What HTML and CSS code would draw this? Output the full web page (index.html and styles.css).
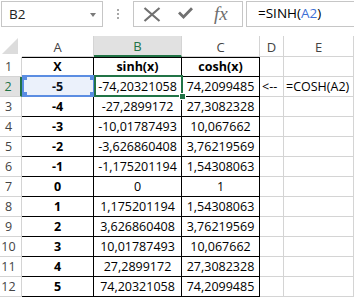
FILE: index.html
```html
<!DOCTYPE html>
<html lang="en">
  <head>
    <meta charset="UTF-8" />
    <title>sinh / cosh</title>
    <link rel="stylesheet" href="styles.css">
  </head>
  <body>
    <div class="formula-bar">
      <div class="name-box">
        <span>B2</span>
        <span class="caret"></span>
      </div>
      <div class="grip">
        <span></span><span></span><span></span>
      </div>
      <div class="buttons">
        <svg class="icon-cancel" viewBox="0 0 18 15">
          <path d="M1.5 1 L16.5 14 M16.5 1 L1.5 14" />
        </svg>
        <svg class="icon-enter" viewBox="0 0 15 12">
          <path d="M1 5.5 L5.5 10 L14 1.2" />
        </svg>
        <span class="fx">fx</span>
      </div>
      <div class="formula">=SINH(<span class="ref">A2</span>)</div>
    </div>

    <div class="sheet">
      <table>
        <colgroup>
          <col class="w-head" /><col class="w-a" /><col class="w-b" />
          <col class="w-c" /><col class="w-d" /><col class="w-e" />
        </colgroup>
        <tr>
          <th class="corner">
            <svg viewBox="0 0 22 20"><polygon points="18,2 18,18 2,18" /></svg>
          </th>
          <th class="col-head">A</th>
          <th class="col-head active">B</th>
          <th class="col-head">C</th>
          <th class="col-head">D</th>
          <th class="col-head">E</th>
        </tr>
        <tr class="first">
          <th class="row-head">1</th>
          <td class="box bold">X</td><td class="box bold">sinh(x)</td><td class="box bold">cosh(x)</td>
          <td></td><td></td>
        </tr>
        <tr>
          <th class="row-head active">2</th>
          <td class="box bold">-5</td><td class="box">-74,20321058</td><td class="box">74,2099485</td>
          <td class="text">&lt;--</td><td class="text">=COSH(A2)</td>
        </tr>
        <tr>
          <th class="row-head">3</th>
          <td class="box bold">-4</td><td class="box">-27,2899172</td><td class="box">27,3082328</td>
          <td></td><td></td>
        </tr>
        <tr>
          <th class="row-head">4</th>
          <td class="box bold">-3</td><td class="box">-10,01787493</td><td class="box">10,067662</td>
          <td></td><td></td>
        </tr>
        <tr>
          <th class="row-head">5</th>
          <td class="box bold">-2</td><td class="box">-3,626860408</td><td class="box">3,76219569</td>
          <td></td><td></td>
        </tr>
        <tr>
          <th class="row-head">6</th>
          <td class="box bold">-1</td><td class="box">-1,175201194</td><td class="box">1,54308063</td>
          <td></td><td></td>
        </tr>
        <tr>
          <th class="row-head">7</th>
          <td class="box bold">0</td><td class="box">0</td><td class="box">1</td>
          <td></td><td></td>
        </tr>
        <tr>
          <th class="row-head">8</th>
          <td class="box bold">1</td><td class="box">1,175201194</td><td class="box">1,54308063</td>
          <td></td><td></td>
        </tr>
        <tr>
          <th class="row-head">9</th>
          <td class="box bold">2</td><td class="box">3,626860408</td><td class="box">3,76219569</td>
          <td></td><td></td>
        </tr>
        <tr>
          <th class="row-head">10</th>
          <td class="box bold">3</td><td class="box">10,01787493</td><td class="box">10,067662</td>
          <td></td><td></td>
        </tr>
        <tr>
          <th class="row-head">11</th>
          <td class="box bold">4</td><td class="box">27,2899172</td><td class="box">27,3082328</td>
          <td></td><td></td>
        </tr>
        <tr>
          <th class="row-head">12</th>
          <td class="box bold">5</td><td class="box">74,20321058</td><td class="box">74,2099485</td>
          <td></td><td></td>
        </tr>
      </table>

      <!-- range referenced by the formula -->
      <div class="ref-range">
        <span class="handle tl"></span><span class="handle tr"></span>
        <span class="handle bl"></span><span class="handle br"></span>
      </div>
      <!-- active cell -->
      <div class="active-cell"><span class="fill-handle"></span></div>
    </div>
  </body>
</html>
```

FILE: styles.css
```css
:root {
  --grid: #d4d4d4;
  --frame: #c6c6c6;
  --excel-green: #217346;
  --ref-blue: #5b8de2;
  --head-text: #444444;
}

* {
  margin: 0;
  padding: 0;
  box-sizing: border-box;
}

body {
  width: 354px;
  height: 297px;
  overflow: hidden;
  background: #ffffff;
  font-family: "Open Sans", "Noto Sans", sans-serif;
  color: #000000;
}

/* formula bar */

.formula-bar {
  display: flex;
  align-items: flex-start;
  height: 36px;
  padding: 1px 0 0 1px;
}

.name-box {
  width: 102px;
  height: 26px;
  border: 1px solid var(--frame);
  display: flex;
  align-items: center;
  justify-content: space-between;
  padding: 0 6px 0 7px;
  font-size: 13.5px;
  color: #222222;
}

.caret {
  border-left: 3.5px solid transparent;
  border-right: 3.5px solid transparent;
  border-top: 4px solid #7a7a7a;
  margin-top: 1px;
}

.grip {
  width: 30px;
  height: 26px;
  display: flex;
  flex-direction: column;
  align-items: center;
  justify-content: center;
  gap: 2px;
}

.grip span {
  width: 2px;
  height: 2px;
  background: #a8a8a8;
}

.buttons {
  width: 110px;
  height: 26px;
  border: 1px solid var(--frame);
  display: flex;
  align-items: center;
  padding-left: 9px;
}

.buttons svg {
  fill: none;
  stroke: #717171;
}

.icon-cancel {
  width: 18px;
  height: 15px;
  stroke-width: 2.2;
}

.icon-enter {
  width: 15px;
  height: 12px;
  margin-left: 17px;
  margin-top: -2px;
  stroke-width: 2.8;
}

.fx {
  margin-left: 21px;
  font-family: "Liberation Serif", serif;
  font-style: italic;
  font-size: 19px;
  color: #6e6e6e;
  line-height: 20px;
}

.formula {
  flex: 1;
  height: 26px;
  margin-left: 3px;
  border: 1px solid var(--frame);
  border-right: none;
  padding-left: 11px;
  font-size: 13.5px;
  line-height: 23px;
  white-space: nowrap;
}

.ref {
  color: #3c6fd6;
}

/* sheet */

.sheet {
  position: relative;
  overflow: hidden;
}

table {
  border-collapse: separate;
  border-spacing: 0;
  table-layout: fixed;
  width: 354px;
}

.w-head { width: 22px; }
.w-a { width: 72px; }
.w-b { width: 88px; }
.w-c { width: 78px; }
.w-d { width: 24px; }
.w-e { width: 70px; }

tr {
  height: 20px;
}

th,
td {
  padding: 0;
  border-right: 1px solid var(--grid);
  border-bottom: 1px solid var(--grid);
  font-size: 12.5px;
  line-height: 18px;
  text-align: center;
  white-space: nowrap;
  overflow: visible;
}

th {
  font-weight: normal;
  color: var(--head-text);
  background: #ffffff;
}

.corner {
  border-right: none;
  border-bottom: none;
  vertical-align: top;
}

.corner svg {
  display: block;
  width: 22px;
  height: 20px;
  fill: #dcdcdc;
}

.col-head {
  font-size: 13px;
  padding-top: 1px;
}

.row-head {
  font-size: 12.5px;
  padding-right: 4px;
}

.col-head.active {
  background: #e1e1e1;
  color: var(--excel-green);
  border-bottom: 2px solid var(--excel-green);
}

.row-head.active {
  background: #e1e1e1;
  color: var(--excel-green);
  border-right: 2px solid var(--excel-green);
}

td.box {
  border-right-color: #000000;
  border-bottom-color: #000000;
}

.first td.box {
  border-top: 1px solid #000000;
}

td.bold {
  font-weight: bold;
}

td.text {
  text-align: left;
  padding-left: 2px;
}

/* selection overlays */

.ref-range {
  position: absolute;
  left: 22px;
  top: 39px;
  width: 73px;
  height: 22px;
  border: 2px solid var(--ref-blue);
  background: rgba(91, 141, 226, 0.12);
}

.handle {
  position: absolute;
  width: 5px;
  height: 5px;
  background: var(--ref-blue);
}

.handle.tl { left: -2px; top: -2px; }
.handle.tr { right: -2px; top: -2px; }
.handle.bl { left: -2px; bottom: -2px; }
.handle.br { right: -2px; bottom: -2px; }

.active-cell {
  position: absolute;
  left: 94px;
  top: 39px;
  width: 89px;
  height: 22px;
  border: 2px solid var(--excel-green);
}

.fill-handle {
  position: absolute;
  right: -5px;
  bottom: -5px;
  width: 7px;
  height: 7px;
  background: var(--excel-green);
  border: 1px solid #ffffff;
}
```
